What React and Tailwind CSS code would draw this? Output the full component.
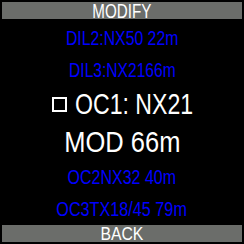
const font = { fontFamily: '"Liberation Sans", Arial, sans-serif' };

const gasLines = {
  top: ['DIL2:NX50 22m', 'DIL3:NX2166m'],
  bottom: ['OC2NX32 40m', 'OC3TX18/45 79m'],
};

const BlueRow = ({ text, h, scale }) => (
  <div className={`flex justify-center items-center ${h}`}>
    <span className={`inline-block text-[20px] leading-none text-[#0000ff] whitespace-pre ${scale}`}>{text}</span>
  </div>
);

export default function App() {
  return (
    <div className="w-[244px] h-[244px] bg-black p-[2px] flex flex-col overflow-hidden" style={font}>
      {/* Title bar */}
      <div className="h-[17px] bg-[#6b6d6a] flex items-center justify-center shrink-0">
        <span className="inline-block text-[20px] leading-none text-white scale-x-[0.76]">MODIFY</span>
      </div>

      <div className="flex-1 flex flex-col pt-[3px]">
        <BlueRow text={gasLines.top[0]} h="h-[32px]" scale="scale-x-[0.79]" />
        <BlueRow text={gasLines.top[1]} h="h-[32px]" scale="scale-x-[0.78]" />

        {/* Selected gas */}
        <div className="h-[36px] flex items-center pl-[50px]">
          <div className="w-[15px] h-[15px] border-2 border-white shrink-0" />
          <span className="inline-block ml-[8px] text-[30px] leading-none text-white whitespace-pre origin-left scale-x-[0.77]">
            OC1: NX21
          </span>
        </div>
        <div className="h-[39px] flex items-center justify-center">
          <span className="inline-block text-[30px] leading-none text-white whitespace-pre scale-x-[0.85]">MOD 66m</span>
        </div>

        <BlueRow text={gasLines.bottom[0]} h="h-[32px]" scale="scale-x-[0.8]" />
        <BlueRow text={gasLines.bottom[1]} h="h-[31px]" scale="scale-x-[0.81]" />
      </div>

      {/* Footer bar */}
      <div className="h-[17px] bg-[#6b6d6a] flex items-center justify-center shrink-0">
        <span className="inline-block text-[19px] leading-none text-white scale-x-[0.83]">BACK</span>
      </div>
    </div>
  );
}
